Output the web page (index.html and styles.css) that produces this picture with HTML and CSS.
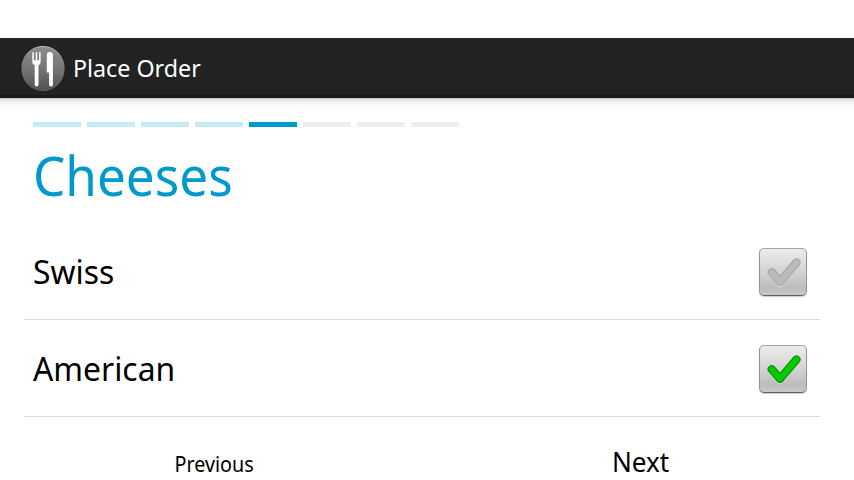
FILE: index.html
```
<!DOCTYPE html>
<html lang="en">
<head>
<meta charset="utf-8">
<title>Place Order</title>
<link rel="stylesheet" href="styles.css">
</head>
<body>
<header class="bar">
  <svg class="logo" width="44" height="46" viewBox="0 0 44 46">
    <defs>
      <linearGradient id="disc" x1="0" y1="0" x2="0" y2="1"><stop offset="0" stop-color="#8c8c8c"/><stop offset=".5" stop-color="#767676"/><stop offset="1" stop-color="#505050"/></linearGradient>
      <linearGradient id="rim" x1="0" y1="0" x2="0" y2="1"><stop offset="0" stop-color="#b4b4b4"/><stop offset=".3" stop-color="#858585"/><stop offset="1" stop-color="#5c5c5c"/></linearGradient>
    </defs>
    <ellipse cx="22" cy="22.500" rx="21" ry="22" fill="url(#disc)" stroke="url(#rim)" stroke-width="1.2"/>
    <path fill="#fff" d="M11.300 6.200h1.500v8h1.900v-8h1.500v8h1.900v-8h1.500v10q0 2-2.100 3V38.500a1.900 1.900 0 0 1-3.800 0V19.200q-2.400-1-2.400-3z"/>
    <path fill="#fff" d="M25.800 9q0-3 3.200-3 2.900 0 2.900 3v29.500a1.900 1.900 0 0 1-3.800 0V26.500h-2.300z"/>
  </svg>
  <h1 class="app">Place Order</h1>
</header>
<main class="page">
  <div class="steps">
    <i class="step done"></i><i class="step done"></i><i class="step done"></i><i class="step done"></i><i class="step current"></i><i class="step"></i><i class="step"></i><i class="step"></i>
  </div>
  <h2 class="title">Cheeses</h2>
  <ul class="list">
    <li class="row"><span class="label">Swiss</span>
      <span class="check"><svg width="46" height="46" viewBox="0 0 46 46"><path class="shine" d="M11 24.500L20 35L37.500 14.500"/><path class="edge" d="M11.700 23.300L20 32.800L36.500 13.500"/><path class="fill" d="M11.700 23.300L20 32.800L36.500 13.500"/></svg></span>
    </li>
    <li class="row"><span class="label">American</span>
      <span class="check on"><svg width="46" height="46" viewBox="0 0 46 46"><path class="shine" d="M11 24.500L20 35L37.500 14.500"/><path class="edge" d="M11.700 23.300L20 32.800L36.500 13.500"/><path class="fill" d="M11.700 23.300L20 32.800L36.500 13.500"/></svg></span>
    </li>
  </ul>
</main>
<nav class="nav"><span class="side"><span class="prev">Previous</span></span><span class="side"><span class="next">Next</span></span></nav>
</body>
</html>
```
FILE: styles.css
```
* { box-sizing: border-box; }
body {
  margin: 0;
  padding-top: 38px;
  height: 480px;
  overflow: hidden;
  background: #fff;
  color: #000;
  font-family: "Noto Sans", "Open Sans", sans-serif;
}
h1, h2, ul { margin: 0; padding: 0; font-weight: 400; }
.bar {
  display: flex;
  align-items: flex-start;
  gap: 8px;
  height: 60px;
  padding: 8px 0 0 21px;
  background: #222;
  border-bottom: 3px solid #191919;
}
.app {
  font-size: 24px;
  line-height: 44px;
  color: #fff;
  white-space: nowrap;
  transform: scaleX(.969);
  transform-origin: left;
}
.page {
  height: 319px;
  padding: 24px 34px 0 24px;
  background: linear-gradient(#b8b8b8 0, #dedede 1px, #f0f0f0 3px, #fafafa 7px, #fff 14px);
}
.steps { display: flex; gap: 6px; padding-left: 9px; }
.step { width: 48px; height: 5px; background: #eee; }
.step.done { background: #c5eaf6; }
.step.current { background: #09c; }
.title {
  width: fit-content;
  margin-top: 11px;
  margin-left: 9px;
  height: 85px;
  font-size: 54px;
  line-height: 74px;
  color: #09c;
  transform: scaleX(.948);
  transform-origin: left;
}
.list { list-style: none; }
.row {
  display: flex;
  justify-content: space-between;
  align-items: center;
  height: 97px;
  padding: 2px 13px 0 9px;
  border-bottom: 1px solid #d9d9d9;
  font-size: 33px;
  line-height: 46px;
}
.label { transform: scaleX(.964); transform-origin: left; }
.check {
  width: 48px;
  height: 48px;
  border: 1px solid #8b8b8b;
  border-color: #a5a5a5 #959595 #606060;
  border-radius: 5px;
  background: linear-gradient(#ececec, #d3d3d3 50%, #bcbcbc 85%, #c8c8c8);
  box-shadow: 0 1px 1px #ccc;
}
.check svg { display: block; }
.check path { fill: none; stroke-linecap: round; stroke-linejoin: round; }
.check .shine { stroke: #e6e6e6; stroke-width: 6; }
.check .edge { stroke: #a0a0a0; stroke-width: 8.2; }
.check .fill { stroke: #bababa; stroke-width: 6.4; }
.check.on .edge { stroke: #078f07; }
.check.on .fill { stroke: #0c0; stroke-width: 5.8; }
.nav { display: flex; height: 63px; overflow: hidden; }
.side { flex: 1; display: flex; justify-content: center; align-items: flex-start; height: 63px; }
.prev { margin: 32px 0 0 1px; font-size: 21px; line-height: 30px; transform: scaleX(.94); }
.next { margin-top: 26px; font-size: 27px; line-height: 38px; transform: scaleX(.968); }
```
